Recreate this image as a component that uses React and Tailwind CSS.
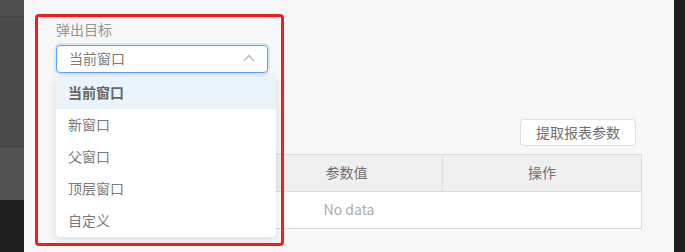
const items = ['当前窗口', '新窗口', '父窗口', '顶层窗口', '自定义']

const font = { fontFamily: '"Noto Sans CJK SC", "Noto Sans", sans-serif' }

export default function App() {
  return (
    <div className="flex w-[685px] h-[252px] overflow-hidden text-[14px] leading-5" style={font}>
      {/* left edge of the page behind the drawer */}
      <div className="w-6 flex flex-col">
        <div className="h-[17px] bg-[#4f4f4f] border-b border-[#444]" />
        <div className="h-[130px] bg-[#4a4a4a] border-b border-[#3e3e3e]" />
        <div className="h-[53px] bg-[#525252]" />
        <div className="flex-1 bg-[#1f1f1f]" />
      </div>

      <div className="relative flex-1 bg-[#f7f7f7] pl-8 pr-8">
        <div className="pt-[19px] pb-px text-[#959595]">弹出目标</div>
        <div className="mt-[5px] w-[212px] h-7 flex items-center justify-between pl-3 pr-3 pb-[2px] bg-white border border-[#5b9ef9] rounded-[4px] shadow-[0_0_0_2px_rgba(64,158,255,0.18)] text-[#7a7a7a]">
          <span>当前窗口</span>
          <svg width="12" height="8" viewBox="0 0 12 8" fill="none">
            <polyline points="1,7 6,1.5 11,7" stroke="#b5b5b5" strokeWidth="1.2" />
          </svg>
        </div>

        <div className="mt-[46px] flex justify-end pr-[6px]">
          <button className="h-[27px] w-[116px] pb-[2px] bg-white border border-[#dcdfe6] rounded-[4px] text-[#707070]">提取报表参数</button>
        </div>

        <div className="mt-2 w-[586px] border border-[#dcdcdc] bg-white text-[#707070]">
          <div className="flex h-[37px] bg-[#efefef] border-b border-[#dcdcdc]">
            <div className="w-[194px] border-r border-[#dcdcdc] flex items-center justify-center pb-[2px]">参数名</div>
            <div className="w-[192px] border-r border-[#dcdcdc] flex items-center justify-center pb-[2px]">参数值</div>
            <div className="flex-1 flex items-center justify-center pb-[2px]">操作</div>
          </div>
          <div className="h-[36px] flex items-center justify-center pb-[2px] text-[#ababab]">No data</div>
        </div>

        {/* dropdown menu */}
        <div className="absolute left-8 top-[77px] w-[220px] bg-white rounded-[4px] shadow-[0_2px_10px_rgba(0,0,0,0.12)]">
          {items.map((t, i) => (
            <div
              key={t}
              className={
                i === 0
                  ? 'h-8 flex items-center pl-3 pb-[2px] bg-[#e9f4fd] font-bold text-[#666]'
                  : 'h-8 flex items-center pl-3 pb-[2px] text-[#7a7a7a]'
              }
            >
              {t}
            </div>
          ))}
        </div>

        {/* red annotation box */}
        <div className="absolute left-[11px] top-[14px] w-[249px] h-[232px] border-[3px] border-[#f41c1c] rounded-[4px] pointer-events-none" />
      </div>

      <div className="w-[11px] bg-[#1e1e1e]" />
    </div>
  )
}
